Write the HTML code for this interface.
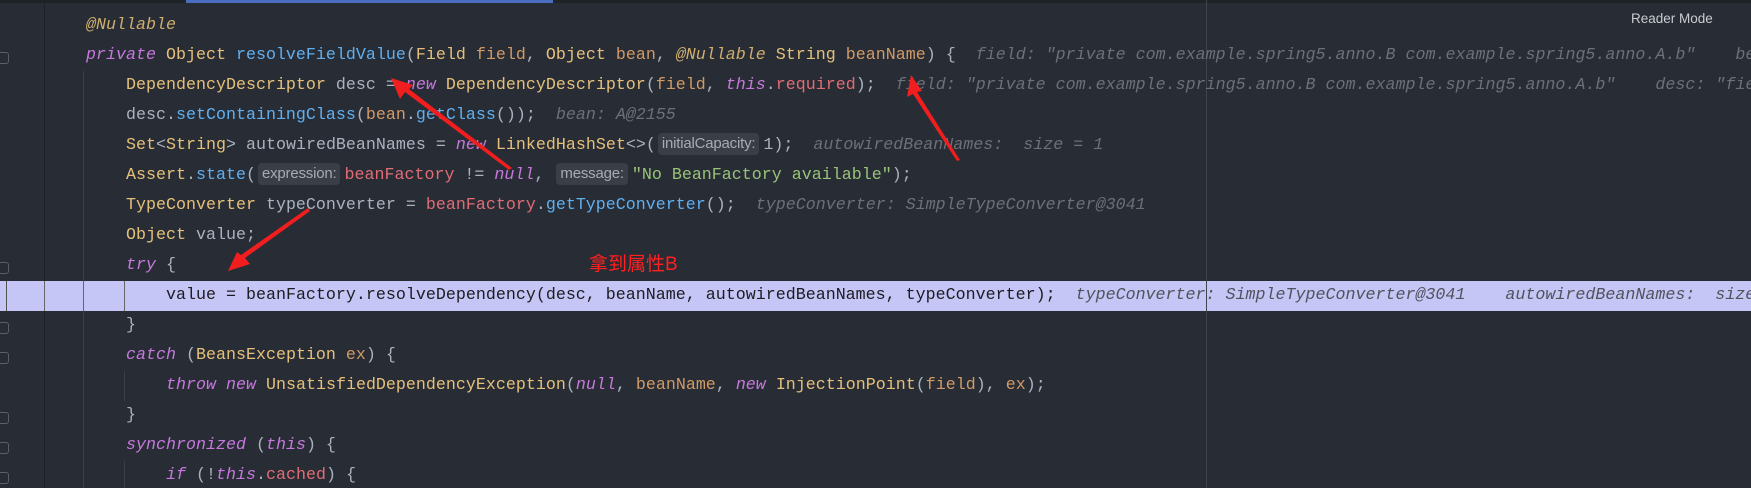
<!DOCTYPE html>
<html><head><meta charset="utf-8"><style>
html,body{margin:0;padding:0;overflow:hidden}
body{width:1751px;height:488px;background:#282c34;font-family:"Liberation Mono",monospace;font-size:16.67px;color:#abb2bf}
#w{position:relative;width:1751px;height:488px;overflow:hidden}
.l{position:absolute;left:0;height:30px;line-height:30px;white-space:pre}
.k{color:#c678dd;font-style:italic}
.c{color:#e5c07b}
.m{color:#61afef}
.f{color:#e06c75}
.s{color:#98c379}
.p{color:#d19a66}
.a{color:#cfae6e;font-style:italic}
.h{color:#6b7079;font-style:italic}
.b{display:inline-block;font-family:"Liberation Sans",sans-serif;font-size:15px;line-height:22px;height:22px;background:#3a3e46;color:#a7abb2;border-radius:4px;padding:0 4px;margin:0 4px 0 2px;vertical-align:1px;letter-spacing:-0.2px}
.hl{position:absolute;left:0;top:281px;width:1751px;height:30px;background:#c6c6f6}
.vl{position:absolute;width:1px}
.fold{position:absolute;left:0;width:8px;height:10px;border:1px solid #5b5f66;border-left:none;border-radius:0 3px 3px 0}
</style></head><body><div id="w">
<div style="position:absolute;left:0;top:0;width:1751px;height:3px;background:#1f2227"></div>
<div style="position:absolute;left:186px;top:0;width:367px;height:3px;background:#4a6fc0"></div>
<div class="hl"></div>
<div class="vl" style="left:44px;top:0;height:488px;background:#1e2126"></div>
<div class="vl" style="left:83px;top:71px;height:417px;background:#3a3e46"></div>
<div class="vl" style="left:124px;top:371px;height:30px;background:#3a3e46"></div>
<div class="vl" style="left:124px;top:461px;height:27px;background:#3a3e46"></div>
<div class="vl" style="left:6px;top:281px;height:30px;background:#555"></div>
<div class="vl" style="left:44px;top:281px;height:30px;background:#666"></div>
<div class="vl" style="left:83px;top:281px;height:30px;background:#666"></div>
<div class="vl" style="left:124px;top:281px;height:30px;background:#666"></div>
<div class="vl" style="left:1206px;top:0;height:488px;background:#3f434b"></div>
<div class="fold" style="top:52px"></div><div class="fold" style="top:262px"></div><div class="fold" style="top:322px"></div><div class="fold" style="top:352px"></div><div class="fold" style="top:412px"></div><div class="fold" style="top:442px"></div><div class="fold" style="top:472px"></div>
<div style="position:absolute;left:1631px;top:11px;font-family:'Liberation Sans',sans-serif;font-size:13.5px;color:#c9ccd1">Reader Mode</div>

<div class="l" style="top:11px;left:86px"><span class="a">@Nullable</span></div>
<div class="l" style="top:41px;left:86px"><span class="k">private</span> <span class="c">Object</span> <span class="m">resolveFieldValue</span>(<span class="c">Field</span> <span class="p">field</span>, <span class="c">Object</span> <span class="p">bean</span>, <span class="a">@Nullable</span> <span class="c">String</span> <span class="p">beanName</span>) {  <span class="h">field: "private com.example.spring5.anno.B com.example.spring5.anno.A.b"    be</span></div>
<div class="l" style="top:71px;left:126px"><span class="c">DependencyDescriptor</span> desc = <span class="k">new</span> <span class="c">DependencyDescriptor</span>(<span class="p">field</span>, <span class="k">this</span>.<span class="f">required</span>);  <span class="h">field: "private com.example.spring5.anno.B com.example.spring5.anno.A.b"    desc: "fie</span></div>
<div class="l" style="top:101px;left:126px">desc.<span class="m">setContainingClass</span>(<span class="p">bean</span>.<span class="m">getClass</span>());  <span class="h">bean: A@2155</span></div>
<div class="l" style="top:131px;left:126px"><span class="c">Set</span>&lt;<span class="c">String</span>&gt; autowiredBeanNames = <span class="k">new</span> <span class="c">LinkedHashSet</span>&lt;&gt;(<span class="b">initialCapacity:</span>1);  <span class="h">autowiredBeanNames:  size = 1</span></div>
<div class="l" style="top:161px;left:126px"><span class="c">Assert</span>.<span class="m">state</span>(<span class="b">expression:</span><span class="f">beanFactory</span> != <span class="k">null</span>, <span class="b">message:</span><span class="s">"No BeanFactory available"</span>);</div>
<div class="l" style="top:191px;left:126px"><span class="c">TypeConverter</span> typeConverter = <span class="f">beanFactory</span>.<span class="m">getTypeConverter</span>();  <span class="h">typeConverter: SimpleTypeConverter@3041</span></div>
<div class="l" style="top:221px;left:126px"><span class="c">Object</span> value;</div>
<div class="l" style="top:251px;left:126px"><span class="k">try</span> {</div>
<div class="l" style="top:281px;left:166px;color:#1c1c22">value = beanFactory.resolveDependency(desc, beanName, autowiredBeanNames, typeConverter);  <span style="color:#50535c;font-style:italic">typeConverter: SimpleTypeConverter@3041    autowiredBeanNames:  size</span></div>
<div class="l" style="top:311px;left:126px">}</div>
<div class="l" style="top:341px;left:126px"><span class="k">catch</span> (<span class="c">BeansException</span> <span class="p">ex</span>) {</div>
<div class="l" style="top:371px;left:166px"><span class="k">throw</span> <span class="k">new</span> <span class="c">UnsatisfiedDependencyException</span>(<span class="k">null</span>, <span class="p">beanName</span>, <span class="k">new</span> <span class="c">InjectionPoint</span>(<span class="p">field</span>), <span class="p">ex</span>);</div>
<div class="l" style="top:401px;left:126px">}</div>
<div class="l" style="top:431px;left:126px"><span class="k">synchronized</span> (<span class="k">this</span>) {</div>
<div class="l" style="top:461px;left:166px"><span class="k">if</span> (!<span class="k">this</span>.<span class="f">cached</span>) {</div>

<div style="position:absolute;left:589px;top:249px;font-family:'Liberation Sans','Noto Sans CJK SC',sans-serif;font-size:19px;color:#ff2020">拿到属性B</div>

<svg style="position:absolute;left:0;top:0" width="1751" height="488">
<g fill="#f01e1e">
<polygon points="512,168 509,170 405,92 400,99 391,78 413,85 409,89"/>
<polygon points="960,160 957,161 913,94 907,97 911,75 922,91 917,92"/>
<polygon points="308,208 310,211 245,258 250,264 228,271 237,252 241,255"/>
</g>
</svg>
</div></body></html>
